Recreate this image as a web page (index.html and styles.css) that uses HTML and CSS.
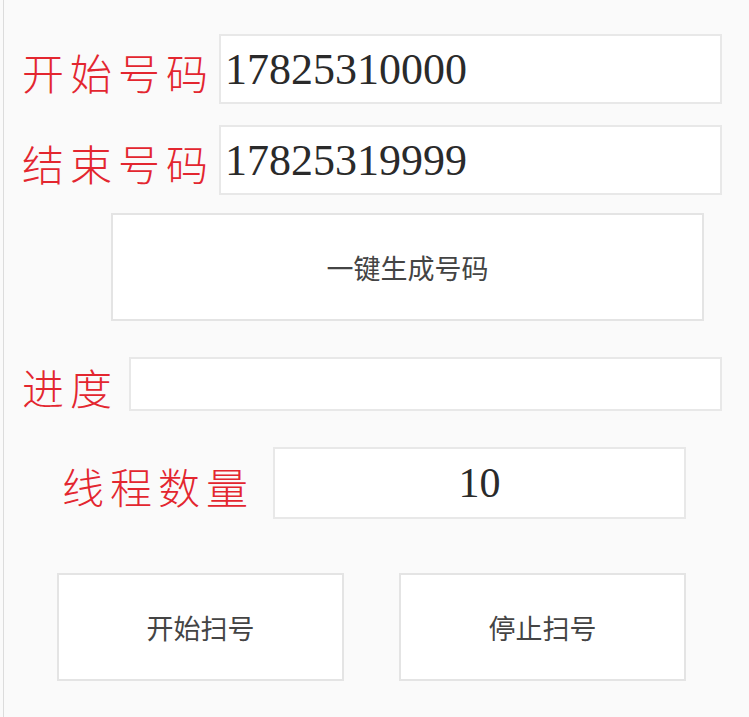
FILE: index.html
```html
<!DOCTYPE html>
<html lang="zh-CN">
<head>
    <meta charset="UTF-8">
    <meta name="viewport" content="width=device-width, initial-scale=1.0">
    <title>号码扫描</title>
    <link rel="stylesheet" href="styles.css">
</head>
<body>
    <!-- 扫号面板 -->
    <div class="panel">
        <div class="row row-start">
            <label class="label">开始号码</label>
            <input class="field field-num" type="text" value="17825310000">
        </div>
        <div class="row row-end">
            <label class="label">结束号码</label>
            <input class="field field-num" type="text" value="17825319999">
        </div>
        <button class="btn btn-gen">一键生成号码</button>
        <div class="row row-progress">
            <label class="label">进度</label>
            <input class="field field-progress" type="text" value="">
        </div>
        <div class="row row-thread">
            <label class="label">线程数量</label>
            <input class="field field-thread" type="text" value="10">
        </div>
        <div class="actions">
            <button class="btn btn-act">开始扫号</button>
            <button class="btn btn-act">停止扫号</button>
        </div>
    </div>
</body>
</html>
```

FILE: styles.css
```css
html, body {
  margin: 0;
  padding: 0;
  background: #fafafa;
}
body {
  padding-left: 3px;
}
.panel {
  height: 717px;
  box-sizing: border-box;
  border-left: 1px solid #dcdcdc;
  padding-top: 34px;
}
.row {
  display: flex;
  align-items: center;
}
.label {
  font-family: "Noto Sans CJK SC", sans-serif;
  font-weight: 300;
  font-size: 42px;
  line-height: 44px;
  letter-spacing: 6px;
  color: #e3262f;
  white-space: nowrap;
  padding-top: 6px;
}
.field {
  box-sizing: border-box;
  border: 2px solid #e8e8e8;
  background: #fff;
  outline: none;
  font-family: "Liberation Serif", serif;
  color: #2a2a2a;
  padding: 0 4px;
  margin: 0;
}
.field-num {
  width: 503px;
  height: 70px;
  font-size: 44px;
}
.row-start, .row-end {
  padding-left: 18px;
}
.row-start .label, .row-end .label {
  width: 197px;
}
.row-end {
  margin-top: 21px;
}

.btn {
  box-sizing: border-box;
  border: 2px solid #e4e4e4;
  background: #fff;
  font-family: "Noto Sans CJK SC", sans-serif;
  font-size: 27px;
  color: #444;
  padding: 0;
  margin: 0;
}
.btn-gen {
  display: block;
  width: 593px;
  height: 108px;
  margin: 18px 0 0 107px;
}

.row-progress {
  margin-top: 36px;
  padding-left: 18px;
}
.row-progress .label {
  width: 107px;
}
.field-progress {
  width: 593px;
  height: 54px;
}

.row-thread {
  margin-top: 36px;
  padding-left: 58px;
}
.row-thread .label {
  width: 211px;
}
.field-thread {
  width: 413px;
  height: 72px;
  font-size: 42px;
  text-align: center;
}

.actions {
  display: flex;
  gap: 55px;
  margin-top: 54px;
  padding-left: 53px;
}
.btn-act {
  width: 287px;
  height: 108px;
}
```
